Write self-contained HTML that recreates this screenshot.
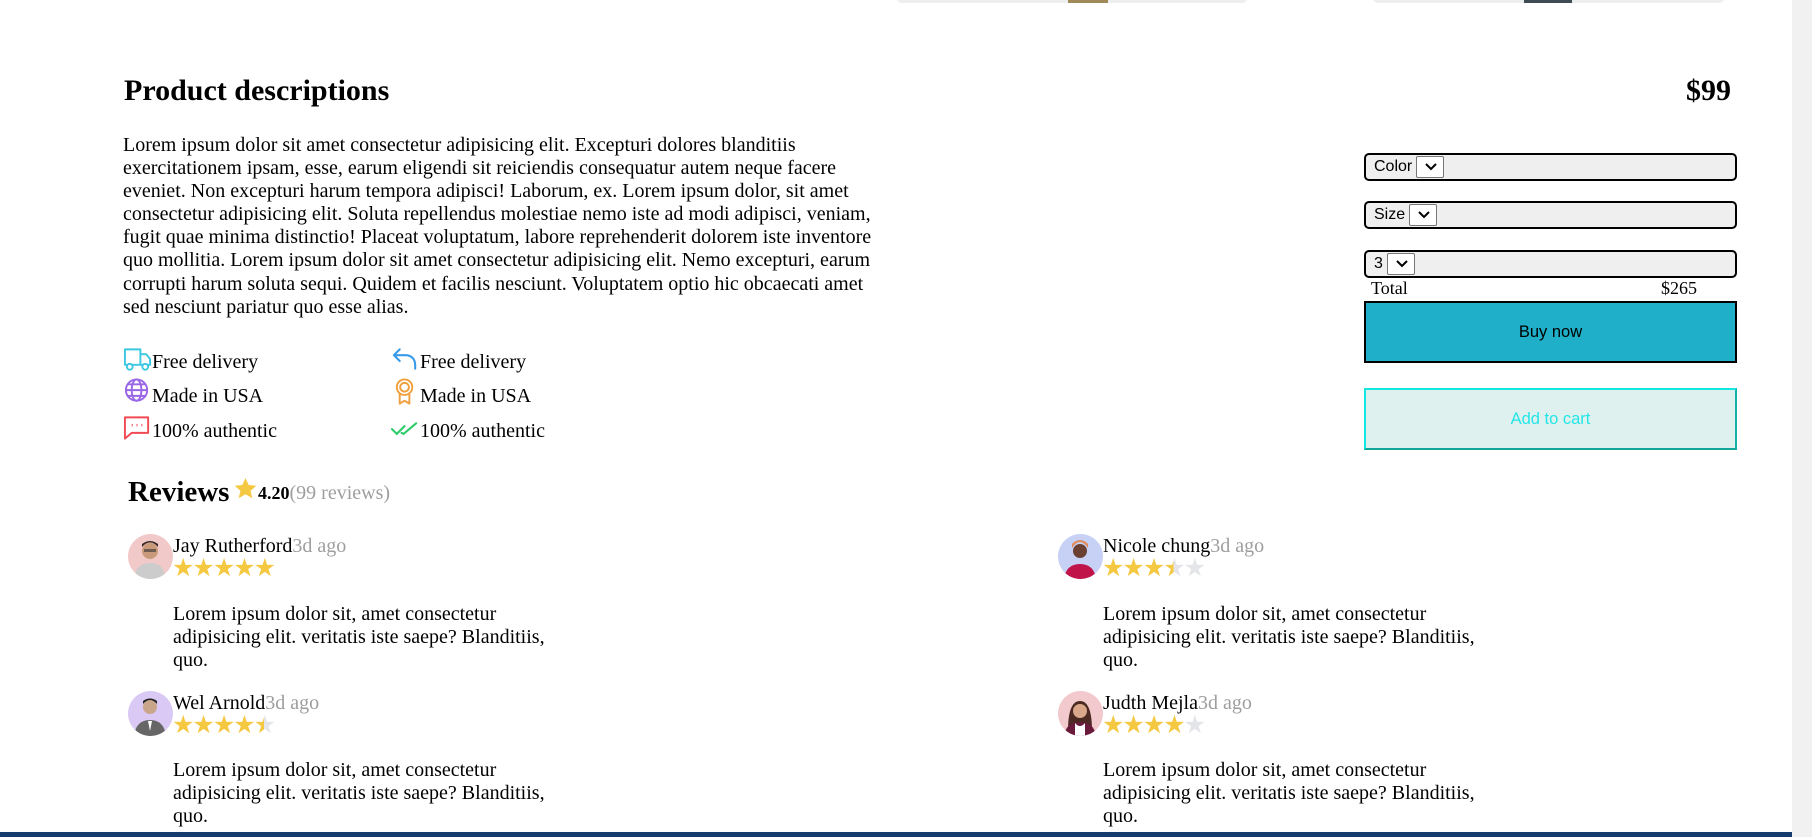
<!DOCTYPE html>
<html><head><meta charset="utf-8"><style>
*{box-sizing:border-box;margin:0;padding:0}
body{width:1812px;height:837px;overflow:hidden;background:#fff;font-family:"Liberation Serif",serif;font-size:20px;color:#000;position:relative}
.a{position:absolute;white-space:nowrap}
.sb{position:absolute;left:1792px;top:0;width:20px;height:837px;background:#f1f1f1}
.bar{position:absolute;left:0;top:832px;width:1792px;height:5px;background:#143a6e}
h2{font-size:30px;font-weight:bold}
.sel{position:absolute;left:1364px;width:373px;height:28px;background:#efefef;border:2px solid #000;border-radius:5px;font-family:"Liberation Sans",sans-serif;font-size:16px;display:flex;align-items:center;padding-left:8px}
.dd{display:inline-block;width:28px;height:22px;border:1px solid #777;border-radius:2px;background:#fff;margin-left:4px;position:relative}
.dd svg{position:absolute;left:8px;top:6px}
.feat{position:absolute;display:flex;align-items:flex-end;height:30px}
.feat svg{margin-right:0}
.av{position:absolute;width:45px;height:45px;border-radius:50%;overflow:hidden}
.rv{position:absolute;width:400px;white-space:normal;line-height:23px}
.g{color:#9e9e9e}
.st{position:absolute;font-size:25px;letter-spacing:-2px;line-height:25px}
</style></head><body>
<div class="a" style="left:896px;top:-10px;width:352px;height:13px;background:#eee;border-radius:8px"></div>
<div class="a" style="left:1068px;top:0;width:40px;height:3px;background:#a08a5a"></div>
<div class="a" style="left:1372px;top:-10px;width:353px;height:13px;background:#eee;border-radius:8px"></div>
<div class="a" style="left:1524px;top:0;width:48px;height:3px;background:#3d4c55"></div>
<div class="sb"></div>

<h2 class="a" style="left:124px;top:74px">Product descriptions</h2>
<h2 class="a" style="left:1686px;top:74px">$99</h2>

<div class="a" style="left:123px;top:134px;width:755px;white-space:normal;line-height:23.1px">Lorem ipsum dolor sit amet consectetur adipisicing elit. Excepturi dolores blanditiis exercitationem ipsam, esse, earum eligendi sit reiciendis consequatur autem neque facere eveniet. Non excepturi harum tempora adipisci! Laborum, ex. Lorem ipsum dolor, sit amet consectetur adipisicing elit. Soluta repellendus molestiae nemo iste ad modi adipisci, veniam, fugit quae minima distinctio! Placeat voluptatum, labore reprehenderit dolorem iste inventore quo mollitia. Lorem ipsum dolor sit amet consectetur adipisicing elit. Nemo excepturi, earum corrupti harum soluta sequi. Quidem et facilis nesciunt. Voluptatem optio hic obcaecati amet sed nesciunt pariatur quo esse alias.</div>

<div class="feat" style="left:123px;top:344px"><svg width="29" height="28" viewBox="0 0 30 28" fill="none" stroke="#3cc8e0" stroke-width="2" stroke-linejoin="round"><path d="M2 3h16v16H2z M18 8h6l4 5v6H18"/><circle cx="7" cy="21" r="3" fill="#fff"/><circle cx="23" cy="21" r="3" fill="#fff"/></svg>Free delivery</div>
<div class="feat" style="left:391px;top:344px"><svg width="29" height="28" viewBox="0 0 30 28" fill="none" stroke="#3a9be8" stroke-width="2.2" stroke-linecap="round" stroke-linejoin="round"><path d="M9 3L3 9l6 6 M3 9h12c6 0 10 4 10 10v4"/></svg>Free delivery</div>
<div class="feat" style="left:123px;top:378px"><svg width="29" height="30" viewBox="0 0 30 30" fill="none" stroke="#9a68e6" stroke-width="2"><circle cx="14" cy="12" r="11"/><ellipse cx="14" cy="12" rx="5" ry="11"/><path d="M3 12h22 M5 6h18 M5 18h18"/></svg>Made in USA</div>
<div class="feat" style="left:391px;top:378px"><svg width="29" height="30" viewBox="0 0 30 30" fill="none" stroke="#f0a03c" stroke-width="2" stroke-linejoin="round"><circle cx="14" cy="9" r="8"/><circle cx="14" cy="9" r="4.5"/><path d="M9 16v10l5-3 5 3V16"/></svg>Made in USA</div>
<div class="feat" style="left:123px;top:413px"><svg width="29" height="28" viewBox="0 0 30 28" fill="none" stroke="#f04a55" stroke-width="2" stroke-linejoin="round"><path d="M2 2h24v16H9l-7 6z"/><path d="M9 10h1 M14 10h1 M19 10h1" stroke-width="2.5"/></svg>100% authentic</div>
<div class="feat" style="left:391px;top:413px"><svg width="29" height="24" viewBox="0 0 30 24" fill="none" stroke="#2ecc6a" stroke-width="2.2" stroke-linecap="round"><path d="M1 10l5 5 8-8 M11 14l2 1 13-11"/></svg>100% authentic</div>

<div class="sel" style="top:153px">Color<span class="dd"><svg width="12" height="8"><path d="M1 1l5 5 5-5" stroke="#000" stroke-width="2" fill="none"/></svg></span></div>
<div class="sel" style="top:201px">Size<span class="dd"><svg width="12" height="8"><path d="M1 1l5 5 5-5" stroke="#000" stroke-width="2" fill="none"/></svg></span></div>
<div class="sel" style="top:250px">3<span class="dd"><svg width="12" height="8"><path d="M1 1l5 5 5-5" stroke="#000" stroke-width="2" fill="none"/></svg></span></div>
<div class="a" style="left:1371px;top:278px;font-size:18px">Total</div>
<div class="a" style="left:1661px;top:278px;font-size:18px">$265</div>
<div class="a" style="left:1364px;top:301px;width:373px;height:62px;background:#20afc8;border:2px solid #000;font-family:'Liberation Sans',sans-serif;font-size:16.5px;display:flex;align-items:center;justify-content:center">Buy now</div>
<div class="a" style="left:1364px;top:388px;width:373px;height:62px;background:#dff1ef;border:2px solid #14e6e2;border-bottom-color:#12a59a;border-right-color:#12b2a8;color:#22e6e6;font-family:'Liberation Sans',sans-serif;font-size:16.5px;display:flex;align-items:center;justify-content:center">Add to cart</div>

<div class="a" style="left:128px;top:476px;font-size:29px;font-weight:bold">Reviews</div>
<svg class="a" style="left:233px;top:477px" width="25" height="24" viewBox="0 0 24 24"><path d="M12 1l3.2 7 7.6.7-5.7 5 1.7 7.5L12 17.3 5.2 21.2l1.7-7.5-5.7-5 7.6-.7z" fill="#f5c842"/></svg>
<div class="a" style="left:258px;top:482px;font-size:18px"><b>4.20</b><span class="g" style="font-size:20px">(99 reviews)</span></div>

<div class="av" style="left:128px;top:534px;background:#f2c9c9"><svg width="45" height="45"><circle cx="22" cy="17" r="8" fill="#c99a7a"/><path d="M14 13q8-9 16 0v-3q-8-6-16 0z" fill="#3a2a22"/><rect x="16" y="15" width="12" height="3" fill="#333" opacity=".6"/><path d="M6 45q2-16 16-16t16 16z" fill="#ccc"/></svg></div>
<div class="a" style="left:173px;top:535px">Jay Rutherford<span class="g">3d ago</span></div>
<div class="st" style="left:172px;top:556px;color:#f5c842">★★★★★</div>
<div class="rv" style="left:173px;top:603px">Lorem ipsum dolor sit, amet consectetur adipisicing elit. veritatis iste saepe? Blanditiis, quo.</div>

<div class="av" style="left:128px;top:691px;background:#d9c9f4"><svg width="45" height="45"><circle cx="22" cy="16" r="7" fill="#c9a58a"/><path d="M15 13q7-8 14 0v-3q-7-5-14 0z" fill="#222"/><path d="M6 45q2-16 16-16t16 16z" fill="#666"/><path d="M20 30l2 10 2-10z" fill="#fff"/></svg></div>
<div class="a" style="left:173px;top:692px">Wel Arnold<span class="g">3d ago</span></div>
<div class="st" style="left:172px;top:713px"><span style="color:#f5c842">★★★★</span><span style="background:linear-gradient(90deg,#f5c842 50%,#e3e5e8 50%);-webkit-background-clip:text;color:transparent">★</span></div>
<div class="rv" style="left:173px;top:759px">Lorem ipsum dolor sit, amet consectetur adipisicing elit. veritatis iste saepe? Blanditiis, quo.</div>

<div class="av" style="left:1058px;top:534px;background:#c6d1f5"><svg width="45" height="45"><circle cx="22" cy="17" r="7" fill="#6a4030"/><path d="M14 14q8-12 16 0v-4q-8-8-16 0z" fill="#e08a5a"/><path d="M6 45q2-15 16-15t16 15z" fill="#c0134a"/></svg></div>
<div class="a" style="left:1103px;top:535px">Nicole chung<span class="g">3d ago</span></div>
<div class="st" style="left:1102px;top:556px"><span style="color:#f5c842">★★★</span><span style="background:linear-gradient(90deg,#f5c842 50%,#e3e5e8 50%);-webkit-background-clip:text;color:transparent">★</span><span style="color:#e3e5e8">★</span></div>
<div class="rv" style="left:1103px;top:603px">Lorem ipsum dolor sit, amet consectetur adipisicing elit. veritatis iste saepe? Blanditiis, quo.</div>

<div class="av" style="left:1058px;top:691px;background:#f2c9cc"><svg width="45" height="45"><path d="M10 40q0-30 12-30t12 30z" fill="#4a2a22"/><circle cx="22" cy="20" r="7" fill="#d9a88a"/><path d="M6 45q2-14 16-14t16 14z" fill="#6a1a3a"/><path d="M17 32q5 6 10 0v13H17z" fill="#fff"/></svg></div>
<div class="a" style="left:1103px;top:692px">Judth Mejla<span class="g">3d ago</span></div>
<div class="st" style="left:1102px;top:713px"><span style="color:#f5c842">★★★★</span><span style="color:#e3e5e8">★</span></div>
<div class="rv" style="left:1103px;top:759px">Lorem ipsum dolor sit, amet consectetur adipisicing elit. veritatis iste saepe? Blanditiis, quo.</div>

<div class="bar"></div>
</body></html>
